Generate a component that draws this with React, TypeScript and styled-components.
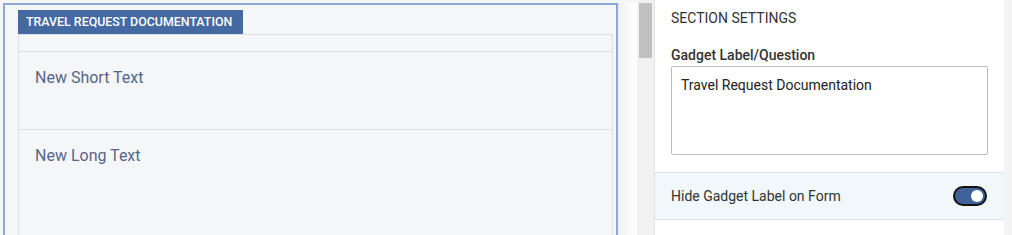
import React from "react";
import styled, { createGlobalStyle } from "styled-components";

const Global = createGlobalStyle`
  html, body { margin: 0; padding: 0; }
  body { font-family: Roboto, "Liberation Sans", Arial, sans-serif; background: #f5f6f8; }
  #root { width: 1012px; height: 235px; overflow: hidden; }
`;

const Page = styled.div`
  display: flex;
  width: 1012px;
  height: 235px;
  overflow: hidden;
`;

const Canvas = styled.div`
  width: 637px;
  flex: none;
  display: flex;
  padding: 3px 0 0 3px;
  box-sizing: border-box;
  background: #f5f6f8;
`;

const SectionBox = styled.div`
  width: 615px;
  flex: none;
  border: 2px solid #8da6d3;
  border-bottom: none;
  box-sizing: border-box;
  background: #f5f6f8;
  padding: 5px 3px 0 13px;
  display: flex;
  flex-direction: column;
`;

const Shade = styled.div`
  flex: 1;
  background: linear-gradient(to right, #efefef, #fbfbfb 60%, #ffffff);
`;

const Tab = styled.div`
  align-self: flex-start;
  width: 225px;
  height: 24px;
  box-sizing: border-box;
  background: #456aa1;
  color: #fff;
  font-size: 12.4px;
  font-weight: 500;
  line-height: 24px;
  padding-left: 8px;
  white-space: nowrap;
`;

const Inner = styled.div`
  flex: 1;
  border: 1px solid #dcdfe4;
  border-bottom: none;
  display: flex;
  flex-direction: column;
`;

const Spacer = styled.div`
  height: 16px;
  border-bottom: 1px solid #dcdfe4;
`;

const Field = styled.div<{ $h: number }>`
  height: ${(p) => p.$h}px;
  flex: none;
  border-bottom: 1px solid #dcdfe4;
  padding: 17px 16px 0;
  box-sizing: border-box;
  font-size: 16px;
  line-height: 18px;
  color: #56668a;
`;

const Track = styled.div`
  width: 18px;
  flex: none;
  background: #f1f1f1;
  border-right: 1px solid #e3e3e3;
  box-sizing: border-box;
  padding: 3px 2px 0;
`;

const Thumb = styled.div`
  height: 55px;
  background: #c1c1c1;
`;

const Panel = styled.div`
  width: 349px;
  flex: none;
  background: #fff;
  display: flex;
  flex-direction: column;
`;

const Edge = styled.div`
  flex: 1;
  background: #f4f4f4;
`;

const Body = styled.div`
  padding: 10px 16px 17px;
  display: flex;
  flex-direction: column;
`;

const Heading = styled.div`
  font-size: 14px;
  line-height: 16px;
  color: #333;
  text-transform: uppercase;
`;

const Label = styled.div`
  margin-top: 21px;
  font-size: 14px;
  font-weight: 500;
  line-height: 16px;
  color: #333;
`;

const TextBox = styled.div`
  margin-top: 3px;
  height: 89px;
  box-sizing: border-box;
  border: 1px solid #bdbdbd;
  border-radius: 2px;
  padding: 9px 9px;
  font-size: 14px;
  line-height: 18px;
  color: #222;
`;

const Row = styled.div`
  height: 48px;
  box-sizing: border-box;
  background: #f1f8fc;
  border-top: 1px solid #dde3e8;
  border-bottom: 1px solid #dde3e8;
  display: flex;
  align-items: center;
  justify-content: space-between;
  padding: 0 17px 0 16px;
  font-size: 14px;
  color: #333;
`;

const Switch = styled.div<{ $on: boolean }>`
  width: 34px;
  height: 20px;
  box-sizing: border-box;
  border: 2px solid #111;
  border-radius: 10px;
  background: ${(p) => (p.$on ? "#3f629a" : "#ccc")};
  display: flex;
  align-items: center;
  justify-content: ${(p) => (p.$on ? "flex-end" : "flex-start")};
  padding: 0 2px;
`;

const Knob = styled.div`
  width: 12px;
  height: 12px;
  border-radius: 50%;
  background: #fff;
`;

export default function App() {
  return (
    <Page>
      <Global />
      <Canvas>
        <SectionBox>
          <Tab>TRAVEL REQUEST DOCUMENTATION</Tab>
          <Inner>
            <Spacer />
            <Field $h={78}>New Short Text</Field>
            <Field $h={120}>New Long Text</Field>
          </Inner>
        </SectionBox>
        <Shade />
      </Canvas>
      <Track>
        <Thumb />
      </Track>
      <Panel>
        <Body>
          <Heading>Section Settings</Heading>
          <Label>Gadget Label/Question</Label>
          <TextBox>Travel Request Documentation</TextBox>
        </Body>
        <Row>
          <span>Hide Gadget Label on Form</span>
          <Switch $on>
            <Knob />
          </Switch>
        </Row>
      </Panel>
      <Edge />
    </Page>
  );
}
